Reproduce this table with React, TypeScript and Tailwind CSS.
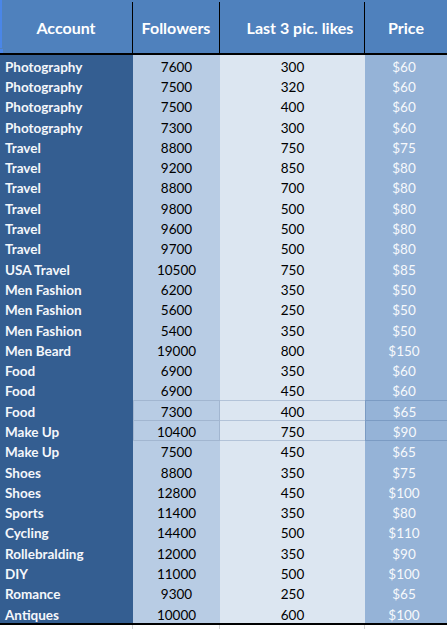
import React from "react";

type Row = [string, number, number, number];

const rows: Row[] = [
  ["Photography", 7600, 300, 60],
  ["Photography", 7500, 320, 60],
  ["Photography", 7500, 400, 60],
  ["Photography", 7300, 300, 60],
  ["Travel", 8800, 750, 75],
  ["Travel", 9200, 850, 80],
  ["Travel", 8800, 700, 80],
  ["Travel", 9800, 500, 80],
  ["Travel", 9600, 500, 80],
  ["Travel", 9700, 500, 80],
  ["USA Travel", 10500, 750, 85],
  ["Men Fashion", 6200, 350, 50],
  ["Men Fashion", 5600, 250, 50],
  ["Men Fashion", 5400, 350, 50],
  ["Men Beard", 19000, 800, 150],
  ["Food", 6900, 350, 60],
  ["Food", 6900, 450, 60],
  ["Food", 7300, 400, 65],
  ["Make Up", 10400, 750, 90],
  ["Make Up", 7500, 450, 65],
  ["Shoes", 8800, 350, 75],
  ["Shoes", 12800, 450, 100],
  ["Sports", 11400, 350, 80],
  ["Cycling", 14400, 500, 110],
  ["Rollebralding", 12000, 350, 90],
  ["DIY", 11000, 500, 100],
  ["Romance", 9300, 250, 65],
  ["Antiques", 10000, 600, 100],
];

export default function App() {
  return (
    <div className="w-[447px] h-[629px] bg-white overflow-hidden font-['Lato','Liberation_Sans',sans-serif] relative">
      {/* header */}
      <div className="grid grid-cols-[133px_87px_145px_82px] h-[53px] bg-[#4f81bd] text-white font-bold text-[16px] pt-[2px]">
        <div className="flex items-center justify-center border-r border-black">Account</div>
        <div className="flex items-center justify-center border-r border-black">Followers</div>
        <div className="flex items-center justify-center border-r border-black pl-[16px]">Last 3 pic. likes</div>
        <div className="flex items-center justify-center">Price</div>
      </div>
      <div className="h-[2px] bg-black" />

      {/* body */}
      <div className="flex flex-col text-[13.5px] leading-[14px]">
        {rows.map((r, i) => {
          const boxed = i === 17 || i === 18;
          const top = boxed ? "border-t" : "";
          const bottom = i === 18 ? "border-b" : "";
          return (
            <div key={i} className="grid grid-cols-[133px_87px_145px_82px] grid-rows-[20.3px] h-[20.3px]">
              <div className="bg-[#345e91] text-[#f4f7fb] font-bold pl-[5px] pt-[3px] flex items-center">{r[0]}</div>
              <div
                className={`bg-[#b8cce4] text-black pt-[3px] flex items-center justify-center ${
                  boxed ? `border-l border-r border-[#a2b6d0] ${top} ${bottom}` : ""
                }`}
              >
                {r[1]}
              </div>
              <div
                className={`bg-[#dce6f1] text-black pt-[3px] flex items-center justify-center ${
                  boxed ? `border-[#b3c3d8] ${top} ${bottom}` : ""
                }`}
              >
                {r[2]}
              </div>
              <div
                className={`bg-[#95b3d7] text-[#f7f9fc] pt-[3px] flex items-center justify-center pr-[4px] ${
                  boxed ? `border-l border-[#7b9bc3] ${top} ${bottom}` : ""
                }`}
              >
                ${r[3]}
              </div>
            </div>
          );
        })}
      </div>
      <div className="h-[2px] bg-black" />
      <div className="grid grid-cols-[133px_87px_145px_82px] h-[6px]">
        <div className="border-r border-[#d4d4d4]" />
        <div className="border-r border-[#d4d4d4]" />
        <div className="border-r border-[#d4d4d4]" />
        <div />
      </div>

      {/* selection marker */}
      <div className="absolute left-0 top-0 w-[2px] h-[48px] bg-[#4a86e8]" />
      <div className="absolute left-0 top-[49px] w-[3px] h-[4px] bg-[#4a86e8]" />
    </div>
  );
}
